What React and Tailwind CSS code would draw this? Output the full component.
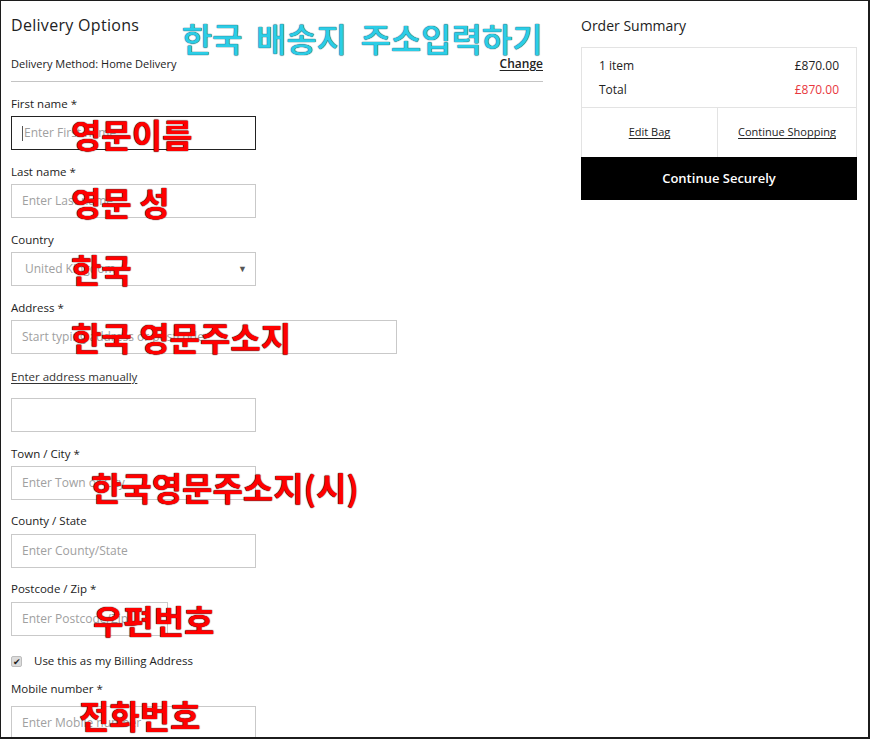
import React from "react";

const FONT = { fontFamily: '"Open Sans", "Liberation Sans", sans-serif' };
const KR = { fontFamily: '"Noto Sans CJK KR", "Noto Sans", sans-serif' };

function Label({ children, className = "" }) {
  return (
    <div className={"shrink-0 text-[11.5px] leading-[16px] font-medium text-[#222] " + className}>
      {children}
    </div>
  );
}

function Box({ placeholder, width = "w-[245px]", focused = false, children, className = "" }) {
  return (
    <div
      className={
        "shrink-0 h-[34px] flex items-center pl-[10px] text-[12px] text-[#a0a0a0] bg-white " +
        width +
        " " +
        (focused ? "border border-[#222] " : "border border-[#c9c9c9] ") +
        className
      }
    >
      {focused && <span className="w-px h-[15px] bg-[#555] mr-px" />}
      {placeholder}
      {children}
    </div>
  );
}

function Note({ children, className = "" }) {
  return (
    <div
      style={KR}
      className={
        "absolute text-[33px] leading-[34px] font-bold text-[#ff0000] whitespace-nowrap [text-shadow:0_0_1px_#3a0000,0_0_1px_#3a0000] " +
        className
      }
    >
      {children}
    </div>
  );
}

export default function App() {
  return (
    <div
      style={FONT}
      className="relative w-[870px] h-[739px] overflow-hidden bg-white border-l border-t border-r-2 border-b-2 border-[#1c1c1c] flex"
    >
      {/* Left column */}
      <div className="w-[532px] ml-[10px] flex flex-col shrink-0">
        <div className="shrink-0 mt-[14px] text-[16px] leading-[20px] tracking-[0.3px] text-[#222]">Delivery Options</div>
        <div className="shrink-0 mt-[21px] flex justify-between items-center text-[11px] leading-[16px] text-[#222]">
          <span>
            Delivery Method: <span className="font-medium">Home Delivery</span>
          </span>
          <span className="text-[12px] font-semibold underline underline-offset-2">Change</span>
        </div>
        <div className="shrink-0 mt-[9px] h-px bg-[#c4c4c4]" />

        <Label className="mt-[14px]">First name *</Label>
        <Box className="mt-[4px]" placeholder="Enter First name" focused />

        <Label className="mt-[14px]">Last name *</Label>
        <Box className="mt-[4px]" placeholder="Enter Last name" />

        <Label className="mt-[14px]">Country</Label>
        <Box className="mt-[4px] pl-[13px] pr-[8px] justify-between text-[#8a8a8a]" placeholder="United Kingdom">
          <span className="text-[9px] text-[#555]">▼</span>
        </Box>

        <Label className="mt-[14px]">Address *</Label>
        <Box className="mt-[4px]" width="w-[386px]" placeholder="Start typing address or postcode" />

        <div className="shrink-0 mt-[15px] text-[11.5px] leading-[16px] text-[#333] underline underline-offset-2">
          Enter address manually
        </div>
        <Box className="mt-[13px]" placeholder="" />

        <Label className="mt-[14px]">Town / City *</Label>
        <Box className="mt-[4px]" placeholder="Enter Town or City" />

        <Label className="mt-[13px]">County / State</Label>
        <Box className="mt-[5px]" placeholder="Enter County/State" />

        <Label className="mt-[13px]">Postcode / Zip *</Label>
        <Box className="mt-[5px]" width="w-[157px]" placeholder="Enter Postcode/Zip" />

        <div className="shrink-0 mt-[17px] flex items-center gap-[12px] text-[11.5px] leading-[16px] text-[#222]">
          <span className="w-[11px] h-[11px] rounded-[2px] bg-[#dcdcdc] border border-[#bdbdbd] flex items-center justify-center text-[9px] leading-none text-[#222]">
            ✔
          </span>
          <span>Use this as my Billing Address</span>
        </div>

        <Label className="mt-[12px]">Mobile number *</Label>
        <Box className="mt-[9px]" placeholder="Enter Mobile number" />
      </div>

      {/* Right column */}
      <div className="ml-[38px] w-[276px] flex flex-col shrink-0">
        <div className="shrink-0 mt-[15px] text-[14px] leading-[20px] text-[#222]">Order Summary</div>
        <div className="shrink-0 mt-[11px] border border-[#e3e3e3]">
          <div className="px-[17px] pt-[10px] pb-[9px] text-[12px] leading-[16px] text-[#222]">
            <div className="flex justify-between">
              <span>1 item</span>
              <span>£870.00</span>
            </div>
            <div className="mt-[8px] flex justify-between">
              <span>Total</span>
              <span className="text-[#e8373d]">£870.00</span>
            </div>
          </div>
          <div className="flex h-[50px] border-t border-[#e3e3e3] text-[11px] text-[#222]">
            <div className="w-[136px] flex items-center justify-center border-r border-[#e3e3e3]">
              <span className="underline underline-offset-2">Edit Bag</span>
            </div>
            <div className="flex-1 flex items-center justify-center">
              <span className="underline underline-offset-2">Continue Shopping</span>
            </div>
          </div>
        </div>
        <div className="shrink-0 h-[43px] -mt-px bg-black flex items-center justify-center text-white text-[13px] font-semibold">
          Continue Securely
        </div>
      </div>

      {/* Annotations */}
      <div
        style={KR}
        className="absolute left-[181px] top-[17px] text-[33px] leading-[40px] font-medium text-[#2ccde6] whitespace-nowrap [word-spacing:6px] [text-shadow:0_0_1px_#0b4f5c,0_0_1px_#0b4f5c]"
      >
        한국 배송지 주소입력하기
      </div>
      <Note className="left-[70px] top-[116px]">영문이름</Note>
      <Note className="left-[70px] top-[184px]">영문 성</Note>
      <Note className="left-[70px] top-[251px]">한국</Note>
      <Note className="left-[70px] top-[319px]">한국 영문주소지</Note>
      <Note className="left-[90px] top-[469px]">한국영문주소지(시)</Note>
      <Note className="left-[92px] top-[602px]">우편번호</Note>
      <Note className="left-[78px] top-[697px]">전화번호</Note>
    </div>
  );
}
